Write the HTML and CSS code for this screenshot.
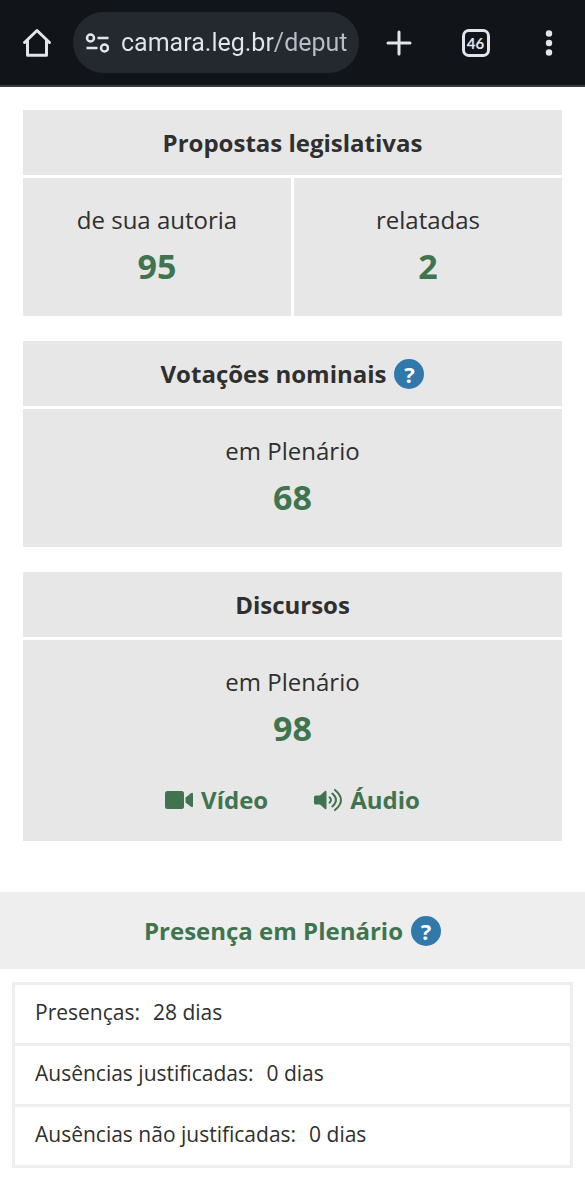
FILE: index.html
```html
<!DOCTYPE html>
<html lang="pt-BR">
<head>
	<meta charset="utf-8">
	<meta name="viewport" content="width=device-width, initial-scale=1">
	<title>Portal da Câmara dos Deputados</title>
	<link rel="stylesheet" href="styles.css">
</head>
<body>

<header class="toolbar">
	<button type="button" class="tool" aria-label="Início">
		<svg width="30" height="30" viewBox="0 0 30 30" fill="none" stroke="currentColor" stroke-width="3" stroke-linecap="round" stroke-linejoin="round">
			<path d="M2.500 14.500 15 2.500l12.500 12M5.500 12v15.300h19V12"/>
		</svg>
	</button>
	<div class="address">
		<svg width="24" height="20" viewBox="0 0 24 20" fill="none" stroke="currentColor" stroke-width="2.500" aria-hidden="true">
			<circle cx="5.500" cy="5" r="3.500"/>
			<path d="M12.500 5H23.500M1.500 15h11"/>
			<circle cx="19.500" cy="15" r="3.500"/>
		</svg>
		<input class="url" type="text" value="camara.leg.br/deput" aria-label="Endereço" spellcheck="false">
	</div>
	<button type="button" class="tool new-tab" aria-label="Nova guia">
		<svg width="26" height="26" viewBox="0 0 26 26" fill="none" stroke="currentColor" stroke-width="3" stroke-linecap="round">
			<path d="M13 2v22M2 13h22"/>
		</svg>
	</button>
	<button type="button" class="tool"><span class="tab-count">46</span></button>
	<button type="button" class="tool" aria-label="Mais opções">
		<svg width="8" height="26" viewBox="0 0 8 26" fill="currentColor">
			<circle cx="4" cy="3.500" r="3.200"/>
			<circle cx="4" cy="13" r="3.200"/>
			<circle cx="4" cy="22.500" r="3.200"/>
		</svg>
	</button>
</header>

<main>
	<div class="cards">
		<section class="card">
			<h2 class="card-title">Propostas legislativas</h2>
			<div class="card-body">
				<div class="stat">
					<span class="label">de sua autoria</span>
					<a class="number" href="#autoria">95</a>
				</div>
				<div class="stat">
					<span class="label">relatadas</span>
					<a class="number" href="#relatadas">2</a>
				</div>
			</div>
		</section>

		<section class="card">
			<h2 class="card-title">Votações nominais <button type="button" class="help">?</button></h2>
			<div class="card-body">
				<div class="stat">
					<span class="label">em Plenário</span>
					<a class="number" href="#votacoes">68</a>
				</div>
			</div>
		</section>

		<section class="card">
			<h2 class="card-title">Discursos</h2>
			<div class="card-body">
				<div class="stat">
					<span class="label">em Plenário</span>
					<a class="number" href="#discursos">98</a>
					<div class="media">
						<a href="#video">
							<svg width="28" height="24" viewBox="0 0 28 24" fill="currentColor" aria-hidden="true">
								<rect x="0" y="3" width="19" height="18" rx="2.500"/>
								<path d="M20.500 9.500 26 5.200q2-1 2 1v11.600q0 2-2 1l-5.500-4.300z"/>
							</svg>
							Vídeo
						</a>
						<a href="#audio">
							<svg width="28" height="24" viewBox="0 0 28 24" fill="currentColor" aria-hidden="true">
								<path d="M1.500 7.500H6l5-4.600q1.500-.8 1.500 1v16.200q0 1.800-1.500 1l-5-4.600H1.500Q0 16.500 0 15V9q0-1.500 1.500-1.500z"/>
								<path d="M15.500 9.300q3 2.700 0 5.400M18.300 5.600q7.400 6.400 0 12.800M21 1.900q12 10.100 0 20.200" fill="none" stroke="currentColor" stroke-width="2" stroke-linecap="round"/>
							</svg>
							Áudio
						</a>
					</div>
				</div>
			</div>
		</section>
	</div>

	<section class="attendance">
		<h2 class="attendance-title">Presença em Plenário <button type="button" class="help">?</button></h2>
		<dl class="days">
			<div class="row"><dt>Presenças:</dt><dd>28 dias</dd></div>
			<div class="row"><dt>Ausências justificadas:</dt><dd>0 dias</dd></div>
			<div class="row"><dt>Ausências não justificadas:</dt><dd>0 dias</dd></div>
		</dl>
	</section>
</main>

</body>
</html>
```
FILE: styles.css
```css
* {
	box-sizing: border-box;
}
body {
	margin: 0;
	background: #fff;
	color: #2f2f2f;
	font-family: "Open Sans", "Noto Sans", sans-serif;
	font-size: 24px;
}
h2,dl,dd {
	margin: 0;
}
a {
	color: #40744f;
	text-decoration: none;
}
button {
	padding: 0;
	border: 0;
	font: inherit;
	cursor: pointer;
}

/* browser bar */
.toolbar {
	display: flex;
	align-items: center;
	height: 87px;
	background: #111418;
	border-bottom: 2px solid #3c383d;
	color: #e3e5ec;
}
.tool {
	display: flex;
	flex: 0 0 73px;
	justify-content: center;
	background: none;
	color: inherit;
}
.new-tab {
	flex-basis: 80px;
}
.address {
	display: flex;
	flex: 1;
	align-items: center;
	gap: 12px;
	min-width: 0;
	height: 61px;
	padding: 0 12px;
	border-radius: 31px;
	background: #242930;
}
.address svg {
	flex: none;
}
.url {
	flex: 1;
	min-width: 0;
	padding: 0;
	border: 0;
	outline: 0;
	font-family: Roboto, sans-serif;
	font-size: 25px;
	/* host is brighter than the path */
	background: linear-gradient(90deg, #e3e5ec 152px, #b9bec7 152px);
	-webkit-background-clip: text;
	background-clip: text;
	color: transparent;
}
.tab-count {
	width: 28px;
	height: 28px;
	border: 3px solid currentColor;
	border-radius: 7px;
	font-family: Lato, sans-serif;
	font-size: 15px;
	font-weight: 700;
	line-height: 22px;
}

/* statistics cards */
.cards {
	display: grid;
	gap: 25px;
	padding: 23px 23px 51px;
}
.card {
	display: grid;
	gap: 3px;
	text-align: center;
}
.card-title {
	display: flex;
	align-items: center;
	justify-content: center;
	gap: 8px;
	height: 65px;
	background: #e7e7e7;
	font-size: 24px;
}
.card-body {
	display: grid;
	grid-auto-flow: column;
	grid-auto-columns: 1fr;
	gap: 3px;
}
.stat {
	display: flex;
	flex-direction: column;
	padding: 24px 16px 22px;
	background: #e7e7e7;
}
.label {
	line-height: 36px;
}
.number {
	font-size: 34px;
	font-weight: 700;
	line-height: 56px;
}
.media {
	display: flex;
	justify-content: center;
	gap: 46px;
	margin-top: 25px;
	font-weight: 700;
	line-height: 38px;
}
.media a {
	display: flex;
	align-items: center;
	gap: 8px;
}
.help {
	width: 30px;
	height: 30px;
	border-radius: 50%;
	background: #3178ab;
	color: #fff;
	font-size: 22px;
	font-weight: 700;
	line-height: 30px;
}

/* attendance */
.attendance-title {
	display: flex;
	align-items: center;
	justify-content: center;
	gap: 8px;
	height: 77px;
	background: #eee;
	color: #40744f;
	font-size: 24px;
}
.days {
	margin: 13px 12px;
	border: 3px solid #eee;
	font-size: 21px;
}
.row {
	display: flex;
	gap: 13px;
	padding: 12px 20px 16px;
	line-height: 30px;
}
.row + .row {
	border-top: 3px solid #eee;
}
```
